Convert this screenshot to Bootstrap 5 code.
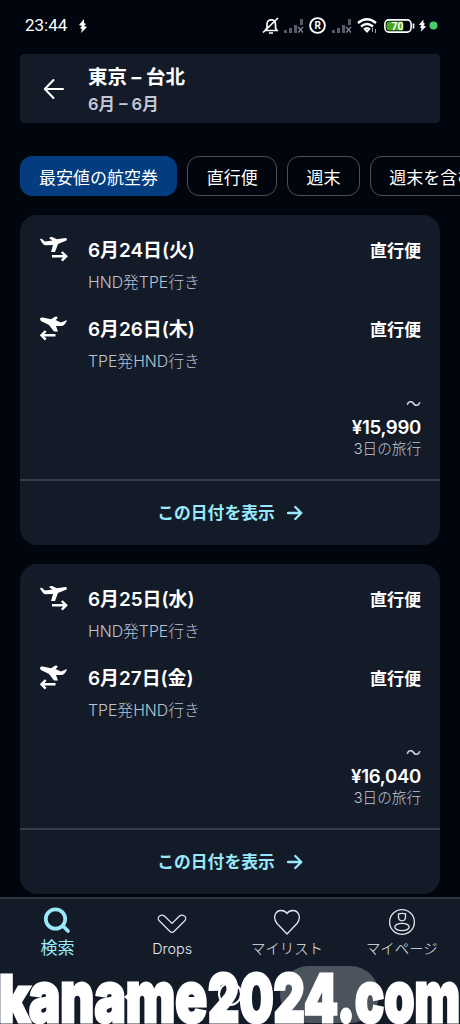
<!DOCTYPE html>
<html lang="ja">
<head>
<meta charset="utf-8">
<meta name="viewport" content="width=device-width, initial-scale=1">
<title>東京 – 台北</title>
<link href="https://cdn.jsdelivr.net/npm/bootstrap@5.3.0/dist/css/bootstrap.min.css" rel="stylesheet">
<style>
html,body{height:1024px;overflow:hidden}
body{background:#00050e;color:#fff;font-family:Inter,"Noto Sans CJK JP",sans-serif;white-space:nowrap}
svg{display:block;flex:none}
.screen{width:460px;height:1024px}
.status{height:54px;padding:1px 21px 4px 25px;font:400 17px/1 Roboto,sans-serif}
.search-head{height:69px;margin:0 20px;background:#131b29;border-radius:4px;padding:0 23px}
.route{font-size:19.5px;line-height:27px;font-weight:700}
.months{font-size:16.5px;line-height:27px;font-weight:600;color:#c2c8d6}
.chips{margin:33px 0 19px 19.5px;gap:10px}
.chip{height:40px;border:1px solid #4b505c;border-radius:12px;padding:2px 18.4px 0;font-size:17px;line-height:38px;flex:none}
.chip.on{background:#043c80;border-color:#043c80}
.trip{height:330px;margin:0 20px 19px;background:#131b29;border-radius:17px;flex:none}
.legs{height:264px;padding:21px 19px 0 20px}
.leg{height:78.5px}
.leg-icon{width:48px;margin-top:-1px}
.date{font-size:18.9px;line-height:29px;font-weight:600}
.ports{font-size:15.8px;line-height:35px;font-weight:300;color:#bcc2cf}
.direct{font-size:17px;line-height:30px;font-weight:700}
.from{font-size:15px;line-height:22px;color:#d9dde5}
.price{font-size:18.6px;line-height:25px;font-weight:600;letter-spacing:-.3px}
.days{font-size:14.6px;line-height:18px;font-weight:300;color:#c2c8d5}
.show{height:66px;border-top:2px solid #373e4b;color:#9ae9fa;font-size:16.8px;font-weight:700;gap:12px}
.show span{padding-top:2px}
.tabs{height:127px;bottom:0;background:#131b29;border-top:2px solid #30363f;z-index:2}
.tab{width:114.8px;font-size:14.4px;line-height:18px;font-weight:300;color:#e2e6ee}
.tab.on{font-size:17px;font-weight:400;color:#9ae9fa}
.tab svg{height:28px;margin:9px 0 4px}
.tab.on svg{margin-bottom:5px;margin-top:7px}
.mark-line{left:0;bottom:0;z-index:3}
.pill{left:280px;bottom:1px;width:99px;height:57px;border-radius:29px;background:#4b535d;z-index:2}
.wm{font-family:Inter,sans-serif;font-weight:900;fill:#fff;stroke:#fff;stroke-width:3}
</style>
</head>
<body>
<svg width="0" height="0" class="position-absolute">
<defs>
<symbol id="out" viewBox="0 0 28 28"><path d="M0 4C2 3.4 3 5 5 6.5L12.5 5.5 9.5 3.5Q9 1.5 12 2L17 4.2 25 3Q28 3 26.5 5.5L18 9 15 17H11L13 10 5 10.3Q2 9 0 4Z" fill="currentColor"/><path d="M12 21.3H26M21.8 17 26.2 21.3 21.8 25.7" fill="none" stroke="currentColor" stroke-width="2.4"/></symbol>
<symbol id="back" viewBox="0 0 28 28"><path d="M0 4.5Q1 3.2 3 3.6L11 5.3 15 2.8Q18 2 17.5 4.2L15.5 6 21 8.5Q24 7 27 6 25.5 11 22 12L16 12 18 17.5H14L9 11 3 8Q0 7 0 4.5Z" fill="currentColor"/><path d="M15.5 21.3H1.5M5.7 17 1.5 21.3 5.7 25.7" fill="none" stroke="currentColor" stroke-width="2.4"/></symbol>
<symbol id="arrow" viewBox="0 0 16 16"><path d="M1 8H14M8.3 2 14.3 8 8.3 14" fill="none" stroke="currentColor" stroke-width="2.3" stroke-linecap="round" stroke-linejoin="round"/></symbol>
<symbol id="bolt" viewBox="0 0 8 14"><path d="M5 0 0 6 3 7 1 9 3 10 2 14 8 8 5 7 7 5 5 4Z" fill="currentColor"/></symbol>
<symbol id="signal" viewBox="0 0 20 14"><path d="M0 11h3v3H0zM5 9h3v5H5zM10 6h3v8h-3zM16 0h3v6h-3z" fill="#555a64"/><path d="m14 8 5 5.5m0-5.5-5 5.5" stroke="#777c85" stroke-width="1.5"/></symbol>
</defs>
</svg>
<main class="screen position-relative overflow-hidden d-flex flex-column">
  <div class="status d-flex align-items-center">
    <span>23:44</span><svg style="margin-left:12px" width="8" height="14"><use href="#bolt"/></svg>
    <div class="ms-auto d-flex align-items-center">
      <svg width="18" height="18" viewBox="0 0 18 18" fill="none" stroke="#fff" stroke-width="1.7"><path d="M3 13.5H15L13.5 11V7C13.5 1.5 5 1.5 5 7V11L3 13.5M7 16h4M1 15.5 16 1"/></svg>
      <svg class="ms-1" width="20" height="14"><use href="#signal"/></svg>
      <svg style="margin-left:5px" width="17" height="17" viewBox="0 0 17 17"><circle cx="8.5" cy="8.5" r="7.4" fill="none" stroke="#fff" stroke-width="1.9"/><text x="8.6" y="12.2" text-anchor="middle" fill="#fff" font-size="10" font-weight="700">R</text></svg>
      <svg style="margin-left:6px" width="20" height="14"><use href="#signal"/></svg>
      <svg style="margin-left:5px" width="21" height="16" viewBox="0 0 21 16"><path d="M1 5Q10 -2.5 19 5M4 8.5Q10 3.5 16 8.5M7 11.5Q10 9 13 11.5" fill="none" stroke="#fff" stroke-width="2.3"/><path d="m7.5 12 2.5 3 2.5-3Z" fill="#fff"/><path d="M15.5 10v4M18.5 11v4" stroke="#9da2aa"/></svg>
      <svg style="margin-left:6px" width="31" height="14" viewBox="0 0 31 14"><rect x=".9" y=".9" width="26.2" height="12.2" rx="4" fill="none" stroke="#fff" stroke-width="1.6"/><path d="M5 2.5H19V11.5H5Q2.5 11.5 2.5 9V5Q2.5 2.5 5 2.5Z" fill="#48a51f"/><path d="M29.5 4.5v5" stroke="#fff" stroke-width="1.7"/><text x="13.5" y="10.8" text-anchor="middle" fill="#fff" font-size="10.5" font-weight="700">70</text></svg>
      <svg style="margin-left:4px" width="7" height="13"><use href="#bolt"/></svg>
      <svg style="margin-left:3px;margin-right:1px" width="9" height="9"><circle cx="4.5" cy="4.5" r="4" fill="#46cc6c"/></svg>
    </div>
  </div>

  <header class="search-head d-flex align-items-center flex-shrink-0">
    <svg width="22" height="22" viewBox="0 0 22 22"><path d="M20 11H2M10.5 2 1.8 11 10.5 20" fill="none" stroke="#fff" stroke-width="2" stroke-linecap="round" stroke-linejoin="round"/></svg>
    <div class="pt-1" style="margin-left:23px"><div class="route">東京 – 台北</div><div class="months">6月 – 6月</div></div>
  </header>

  <nav class="chips d-flex flex-shrink-0">
    <div class="chip on">最安値の航空券</div><div class="chip">直行便</div><div class="chip">週末</div><div class="chip">週末を含む</div>
  </nav>

  <section class="trip">
    <div class="legs">
      <div class="leg d-flex"><div class="leg-icon"><svg width="28" height="28"><use href="#out"/></svg></div><div><div class="date">6月24日(火)</div><div class="ports">HND発TPE行き</div></div><div class="direct ms-auto">直行便</div></div>
      <div class="leg d-flex"><div class="leg-icon"><svg width="28" height="28"><use href="#back"/></svg></div><div><div class="date">6月26日(木)</div><div class="ports">TPE発HND行き</div></div><div class="direct ms-auto">直行便</div></div>
      <div class="text-end"><div class="from">～</div><div class="price">¥15,990</div><div class="days">3日の旅行</div></div>
    </div>
    <div class="show d-flex align-items-center justify-content-center"><span>この日付を表示</span><svg width="16" height="16"><use href="#arrow"/></svg></div>
  </section>

  <section class="trip">
    <div class="legs">
      <div class="leg d-flex"><div class="leg-icon"><svg width="28" height="28"><use href="#out"/></svg></div><div><div class="date">6月25日(水)</div><div class="ports">HND発TPE行き</div></div><div class="direct ms-auto">直行便</div></div>
      <div class="leg d-flex"><div class="leg-icon"><svg width="28" height="28"><use href="#back"/></svg></div><div><div class="date">6月27日(金)</div><div class="ports">TPE発HND行き</div></div><div class="direct ms-auto">直行便</div></div>
      <div class="text-end"><div class="from">～</div><div class="price">¥16,040</div><div class="days">3日の旅行</div></div>
    </div>
    <div class="show d-flex align-items-center justify-content-center"><span>この日付を表示</span><svg width="16" height="16"><use href="#arrow"/></svg></div>
  </section>

  <nav class="tabs position-absolute w-100 d-flex">
    <div class="tab on d-flex flex-column align-items-center"><svg width="28" height="28" viewBox="0 0 28 28" fill="none" stroke="currentColor" stroke-width="3.7" stroke-linecap="round"><circle cx="12.5" cy="13" r="9.7"/><path d="m20 20 5 5"/></svg>検索</div>
    <div class="tab d-flex flex-column align-items-center"><svg width="30" height="28" viewBox="0 0 30 28" fill="none" stroke="currentColor" stroke-width="1.2"><path d="M2 12.5Q0 9.5 3 7.8 6 6.2 8.5 9L15 15.5 21.5 9Q24 6.2 27 7.8 30 9.5 28 12.5L17.5 23Q15 25.8 12.5 23Z"/></svg>Drops</div>
    <div class="tab d-flex flex-column align-items-center"><svg width="28" height="28" viewBox="0 0 28 28" fill="none" stroke="currentColor" stroke-width="1.3"><path d="M14 26 4 15.5C-1 9 3 2.5 8 2.5Q12 2.5 14 5.5 16 2.5 20 2.5C25 2.5 29 9 24 15.5Z"/></svg>マイリスト</div>
    <div class="tab d-flex flex-column align-items-center"><svg width="28" height="28" viewBox="0 0 28 28" fill="none" stroke="currentColor" stroke-width="1.3"><circle cx="14" cy="14" r="12.4"/><path d="M10.5 5.8Q14 4.8 17.5 5.8V9.5Q17 12.8 14 12.8T10.5 9.5Z"/><ellipse cx="14" cy="19" rx="7.2" ry="3.7"/></svg>マイページ</div>
  </nav>
  <div class="pill position-absolute"></div>
  <svg class="mark-line position-absolute" width="460" height="54" viewBox="0 0 460 54">
    <circle cx="230" cy="24" r="11" fill="none" stroke="#fff" stroke-width="2"/>
    <path d="m124 27 6-5v10z" fill="#fff"/>
    <g class="wm">
      <text x="-1" y="52" font-size="64" textLength="31" lengthAdjust="spacingAndGlyphs">k</text>
      <text x="29" y="52" font-size="71" textLength="178" lengthAdjust="spacingAndGlyphs">aname</text>
      <text x="208" y="52" font-size="66" textLength="130" lengthAdjust="spacingAndGlyphs">2024</text>
      <text x="337" y="52" font-size="71" textLength="123" lengthAdjust="spacingAndGlyphs">.com</text>
    </g>
  </svg>
</main>
<script src="https://cdn.jsdelivr.net/npm/bootstrap@5.3.0/dist/js/bootstrap.bundle.min.js"></script>
</body>
</html>
